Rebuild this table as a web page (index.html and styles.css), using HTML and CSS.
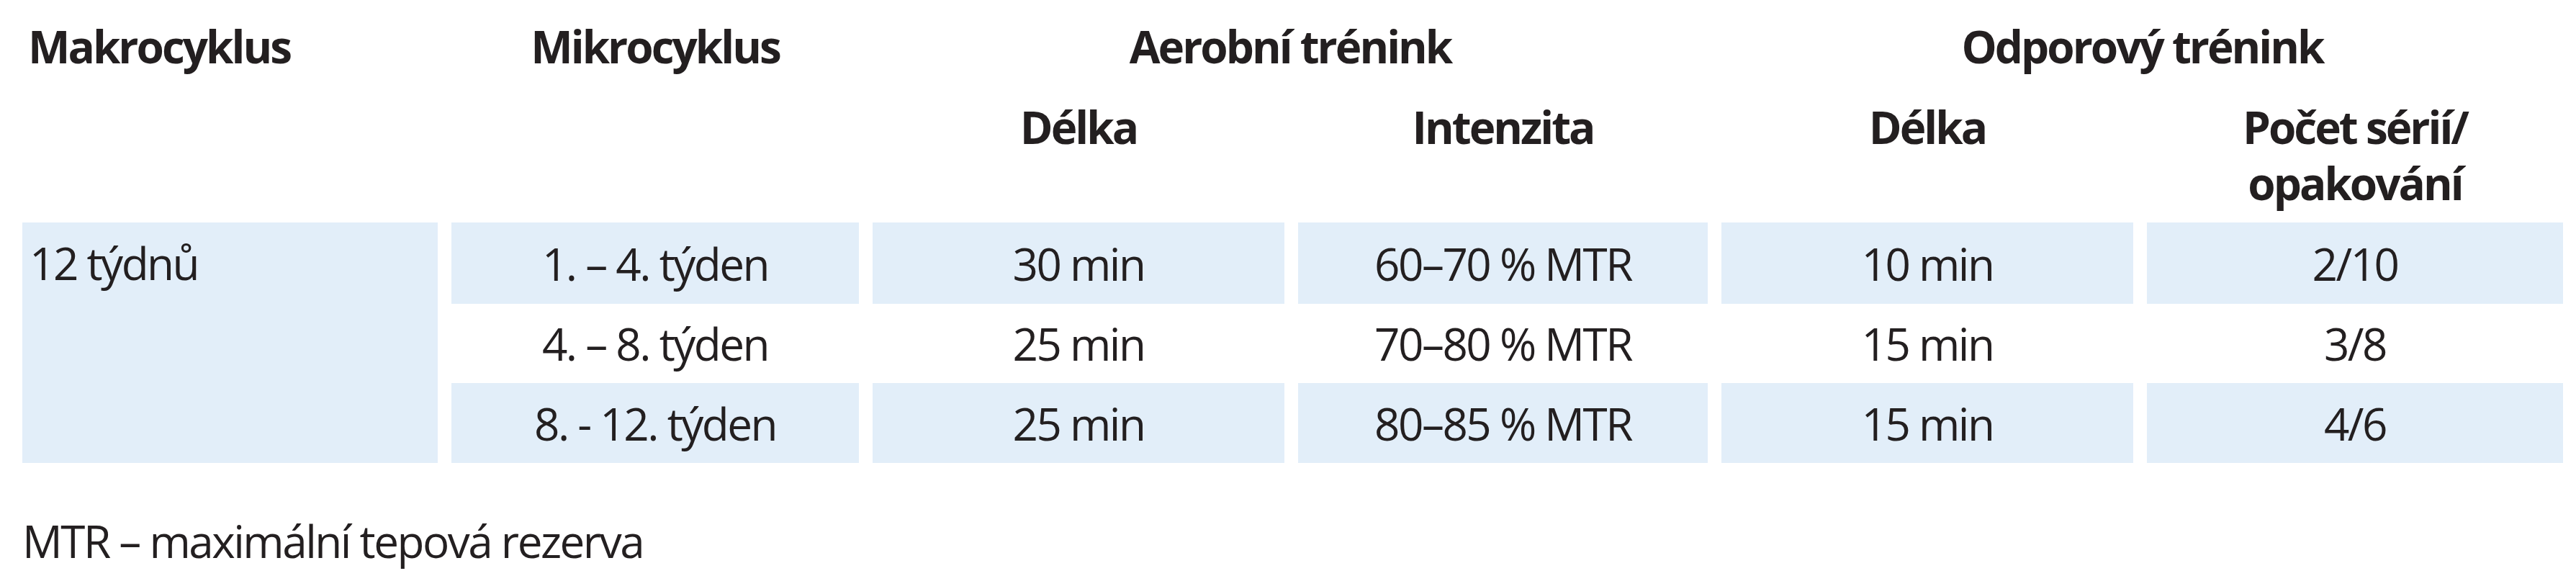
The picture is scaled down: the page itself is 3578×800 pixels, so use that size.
FILE: index.html
```html
<!DOCTYPE html>
<html lang="cs">
<head>
<meta charset="utf-8">
<title>Tréninkový plán</title>
<link rel="stylesheet" href="styles.css">
</head>
<body>
<div class="page">
  <div class="table">
    <div class="h h1 c1 left">Makrocyklus</div>
    <div class="h h1 c2">Mikrocyklus</div>
    <div class="h h1 c34">Aerobní trénink</div>
    <div class="h h1 c56">Odporový trénink</div>

    <div class="h h2 c3">Délka</div>
    <div class="h h2 c4">Intenzita</div>
    <div class="h h2 c5">Délka</div>
    <div class="h h2 c6">Počet sérií/<br>opakování</div>

    <div class="makro">12 týdnů</div>

    <div class="cell blue r1 c2">1. – 4. týden</div>
    <div class="cell blue r1 c3">30 min</div>
    <div class="cell blue r1 c4">60–70 % MTR</div>
    <div class="cell blue r1 c5">10 min</div>
    <div class="cell blue r1 c6">2/10</div>

    <div class="cell r2 c2">4. – 8. týden</div>
    <div class="cell r2 c3">25 min</div>
    <div class="cell r2 c4">70–80 % MTR</div>
    <div class="cell r2 c5">15 min</div>
    <div class="cell r2 c6">3/8</div>

    <div class="cell blue r3 c2">8. - 12. týden</div>
    <div class="cell blue r3 c3">25 min</div>
    <div class="cell blue r3 c4">80–85 % MTR</div>
    <div class="cell blue r3 c5">15 min</div>
    <div class="cell blue r3 c6">4/6</div>
  </div>
  <p class="note">MTR – maximální tepová rezerva</p>
</div>
</body>
</html>
```
FILE: styles.css
```css
html, body {
  margin: 0;
  padding: 0;
  background: #ffffff;
}

.page {
  width: 3578px;
  height: 800px;
  padding: 0 18px 0 31px;
  box-sizing: border-box;
  font-family: "Open Sans", "Liberation Sans", sans-serif;
  font-size: 62px;
  line-height: 78px;
  color: #231f20;
  letter-spacing: -2.5px;
}

.table {
  display: grid;
  grid-template-columns: 577px 566px 572px 569px 572px 578px;
  column-gap: 19px;
  grid-template-rows: 137px 172px 113px 110px 111px;
}

.h {
  font-weight: 700;
  letter-spacing: -3px;
  text-align: center;
}

.h1 {
  grid-row: 1;
  padding-top: 25px;
}

.h2 {
  grid-row: 2;
}

.left {
  text-align: left;
  padding-left: 8px;
}

.c1 { grid-column: 1; }
.c2 { grid-column: 2; }
.c3 { grid-column: 3; }
.c4 { grid-column: 4; }
.c5 { grid-column: 5; }
.c6 { grid-column: 6; }
.c34 { grid-column: 3 / 5; }
.c56 { grid-column: 5 / 7; }

.r1 { grid-row: 3; }
.r2 { grid-row: 4; }
.r3 { grid-row: 5; }

.makro {
  grid-column: 1;
  grid-row: 3 / 6;
  background: #e2eef9;
  padding: 17px 0 0 10px;
}

.cell {
  display: flex;
  align-items: center;
  justify-content: center;
}

.blue {
  background: #e2eef9;
}

.note {
  margin: 69px 0 0 0;
}
```
